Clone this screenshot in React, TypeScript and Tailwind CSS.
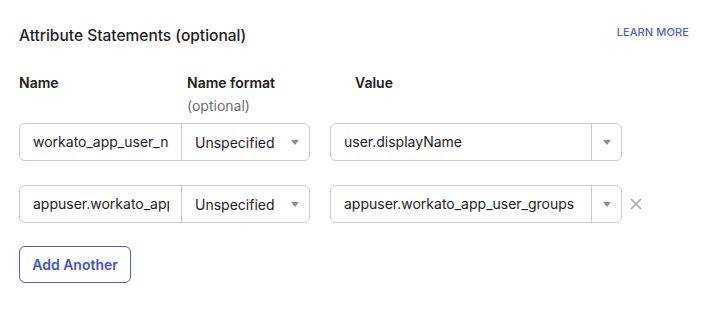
import React from "react";

const font = { fontFamily: "Inter, 'Noto Sans', sans-serif" };

function Caret() {
  return (
    <svg width="8" height="5" viewBox="0 0 8 5" className="text-[#8c8c96]">
      <path d="M0 0h8L4 5z" fill="currentColor" />
    </svg>
  );
}

type Row = { name: string; format: string; value: string; removable?: boolean };

const rows: Row[] = [
  { name: "workato_app_user_name", format: "Unspecified", value: "user.displayName" },
  { name: "appuser.workato_app_user_groups", format: "Unspecified", value: "appuser.workato_app_user_groups", removable: true },
];

// one attribute row: name + format box, then value combo box
function AttrRow({ row }: { row: Row }) {
  return (
    <div className="flex items-center">
      <div className="flex h-[38px] w-[291px] rounded-md border border-[#c9c9cf] bg-white">
        <div className="w-[162px] shrink-0 border-r border-[#c9c9cf] pl-[13px] pr-[12px]">
          <div className="overflow-hidden whitespace-nowrap text-[14px] leading-[36px] text-[#1d1d21]">{row.name}</div>
        </div>
        <div className="flex flex-1 items-center justify-between pl-[13px] pr-[10px] text-[14px] text-[#1d1d21]">
          <span>{row.format}</span>
          <Caret />
        </div>
      </div>
      <div className="ml-[20px] flex h-[38px] w-[292px] rounded-md border border-[#c9c9cf] bg-white">
        <div className="flex-1 overflow-hidden whitespace-nowrap border-r border-[#c9c9cf] pl-[13px] text-[14px] leading-[36px] text-[#1d1d21]">
          {row.value}
        </div>
        <div className="flex w-[29px] items-center justify-center">
          <Caret />
        </div>
      </div>
      {row.removable && (
        <svg width="12" height="12" viewBox="0 0 12 12" className="ml-[8px] text-[#a8a8ae]">
          <path d="M1 1l10 10M11 1L1 11" stroke="currentColor" strokeWidth="1.6" />
        </svg>
      )}
    </div>
  );
}

export default function App() {
  return (
    <div className="h-[310px] w-[705px] bg-white pl-[19px] pr-[16px] pt-[25px]" style={font}>
      <div className="flex items-center justify-between">
        <h2 className="text-[15.5px] font-medium leading-[22px] text-[#1d1d21]">Attribute Statements (optional)</h2>
        <a className="-mt-[8px] text-[11px] font-medium tracking-[0.01em] text-[#4b5fd8]">LEARN MORE</a>
      </div>
      <div className="mt-[25px] flex text-[14px] font-semibold text-[#1d1d21]">
        <div className="w-[168px]">Name</div>
        <div className="w-[168px]">
          <div className="leading-[22px]">Name format</div>
          <div className="mt-[1px] text-[14px] font-normal leading-[22px] text-[#6e6e78]">(optional)</div>
        </div>
        <div className="leading-[22px]">Value</div>
      </div>
      <div className="mt-[6px] flex flex-col gap-[24px]">
        {rows.map((r, i) => (
          <AttrRow key={i} row={r} />
        ))}
      </div>
      <button className="mt-[23px] h-[37px] w-[112px] rounded-md border border-[#4b5fd8] text-[14px] font-semibold text-[#3f55cf]">
        Add Another
      </button>
    </div>
  );
}
